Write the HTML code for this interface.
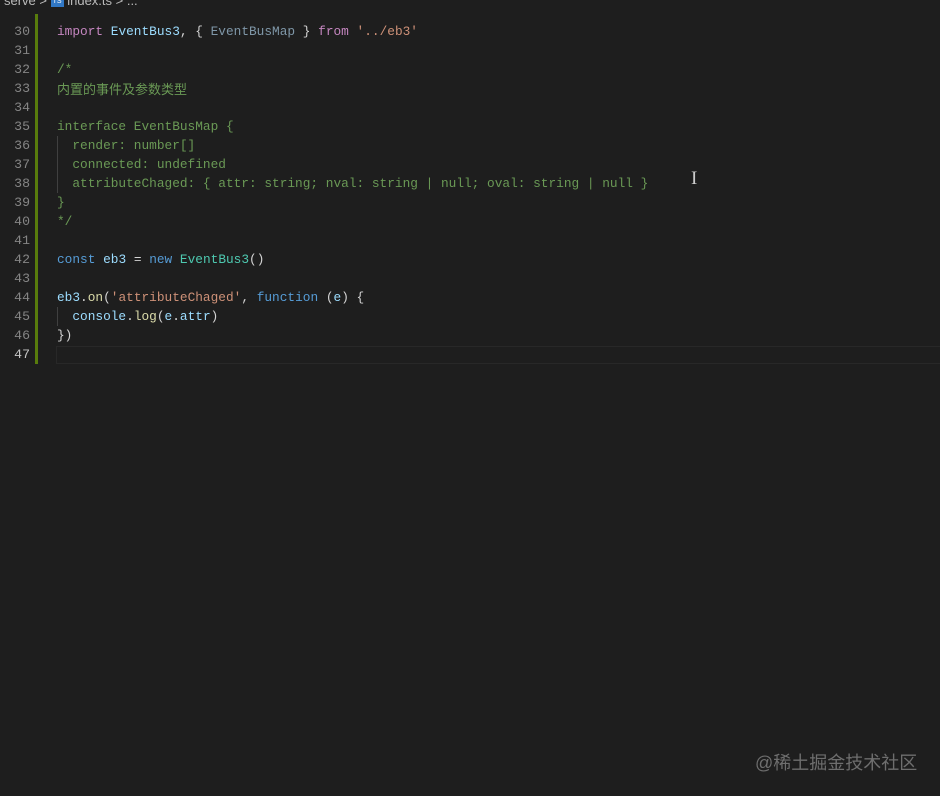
<!DOCTYPE html>
<html><head><meta charset="utf-8"><style>
html,body{margin:0;padding:0;background:#1e1e1e;width:940px;height:796px;overflow:hidden}
body{position:relative;font-family:"Liberation Mono","Noto Sans CJK SC",monospace;font-size:12.8px}
.ln{position:absolute;left:0;width:30px;text-align:right;color:#858585;height:19px;line-height:19px;font-size:13.2px}
.c{position:absolute;left:57px;height:19px;line-height:19px;white-space:pre;color:#d4d4d4}
.k{color:#c586c0}.b{color:#569cd6}.v{color:#9cdcfe}.t{color:#4ec9b0}.f{color:#dcdcaa}.s{color:#ce9178}.g{color:#6a9955}.u{color:#7f97a8}
.guide{position:absolute;left:57px;width:1px;background:#404040}
</style></head><body>
<div class="ln" style="top:-11px">29</div>
<div style="position:absolute;top:0;left:0;width:200px;height:10px;background:#1e1e1e"></div>
<div style="position:absolute;top:-7px;left:4px;font-family:'Liberation Sans',sans-serif;font-size:13px;color:#bbbbbb;line-height:15px">serve &gt; <span style="display:inline-block;width:13px;height:10px;background:#3178c6;vertical-align:middle;color:#fff;font-size:7px;line-height:10px;text-align:center">TS</span> index.ts &gt; ...</div>
<div style="position:absolute;left:35px;top:14px;width:3px;height:350px;background:#587c0c"></div>
<div style="position:absolute;left:56px;top:346px;width:884px;height:16px;border:1px solid #282828"></div>
<div class="guide" style="top:136px;height:57px"></div>
<div class="guide" style="top:307px;height:19px"></div>

<div class="ln" style="top:22px">30</div><div class="c" style="top:22px"><span class="k">import</span> <span class="v">EventBus3</span>, { <span class="u">EventBusMap</span> } <span class="k">from</span> <span class="s">'../eb3'</span></div>
<div class="ln" style="top:41px">31</div>
<div class="ln" style="top:60px">32</div><div class="c g" style="top:60px">/*</div>
<div class="ln" style="top:79px">33</div><div class="c g" style="top:79px;font-family:'Noto Sans CJK SC',sans-serif;font-size:13px">内置的事件及参数类型</div>
<div class="ln" style="top:98px">34</div>
<div class="ln" style="top:117px">35</div><div class="c g" style="top:117px">interface EventBusMap {</div>
<div class="ln" style="top:136px">36</div><div class="c g" style="top:136px">  render: number[]</div>
<div class="ln" style="top:155px">37</div><div class="c g" style="top:155px">  connected: undefined</div>
<div class="ln" style="top:174px">38</div><div class="c g" style="top:174px">  attributeChaged: { attr: string; nval: string | null; oval: string | null }</div>
<div class="ln" style="top:193px">39</div><div class="c g" style="top:193px">}</div>
<div class="ln" style="top:212px">40</div><div class="c g" style="top:212px">*/</div>
<div class="ln" style="top:231px">41</div>
<div class="ln" style="top:250px">42</div><div class="c" style="top:250px"><span class="b">const</span> <span class="v">eb3</span> = <span class="b">new</span> <span class="t">EventBus3</span>()</div>
<div class="ln" style="top:269px">43</div>
<div class="ln" style="top:288px">44</div><div class="c" style="top:288px"><span class="v">eb3</span>.<span class="f">on</span>(<span class="s">'attributeChaged'</span>, <span class="b">function</span> (<span class="v">e</span>) {</div>
<div class="ln" style="top:307px">45</div><div class="c" style="top:307px">  <span class="v">console</span>.<span class="f">log</span>(<span class="v">e</span>.<span class="v">attr</span>)</div>
<div class="ln" style="top:326px">46</div><div class="c" style="top:326px">})</div>
<div class="ln" style="top:345px;color:#c6c6c6">47</div>
<div style="position:absolute;left:691px;top:169px;color:#ccc;font-size:19px;line-height:20px;font-family:'Liberation Serif',serif">I</div>
<div style="position:absolute;left:755px;top:751px;color:#6e6e6e;font-family:'Liberation Sans','Noto Sans CJK SC',sans-serif;font-size:18px;line-height:24px">@稀土掘金技术社区</div>
</body></html>
